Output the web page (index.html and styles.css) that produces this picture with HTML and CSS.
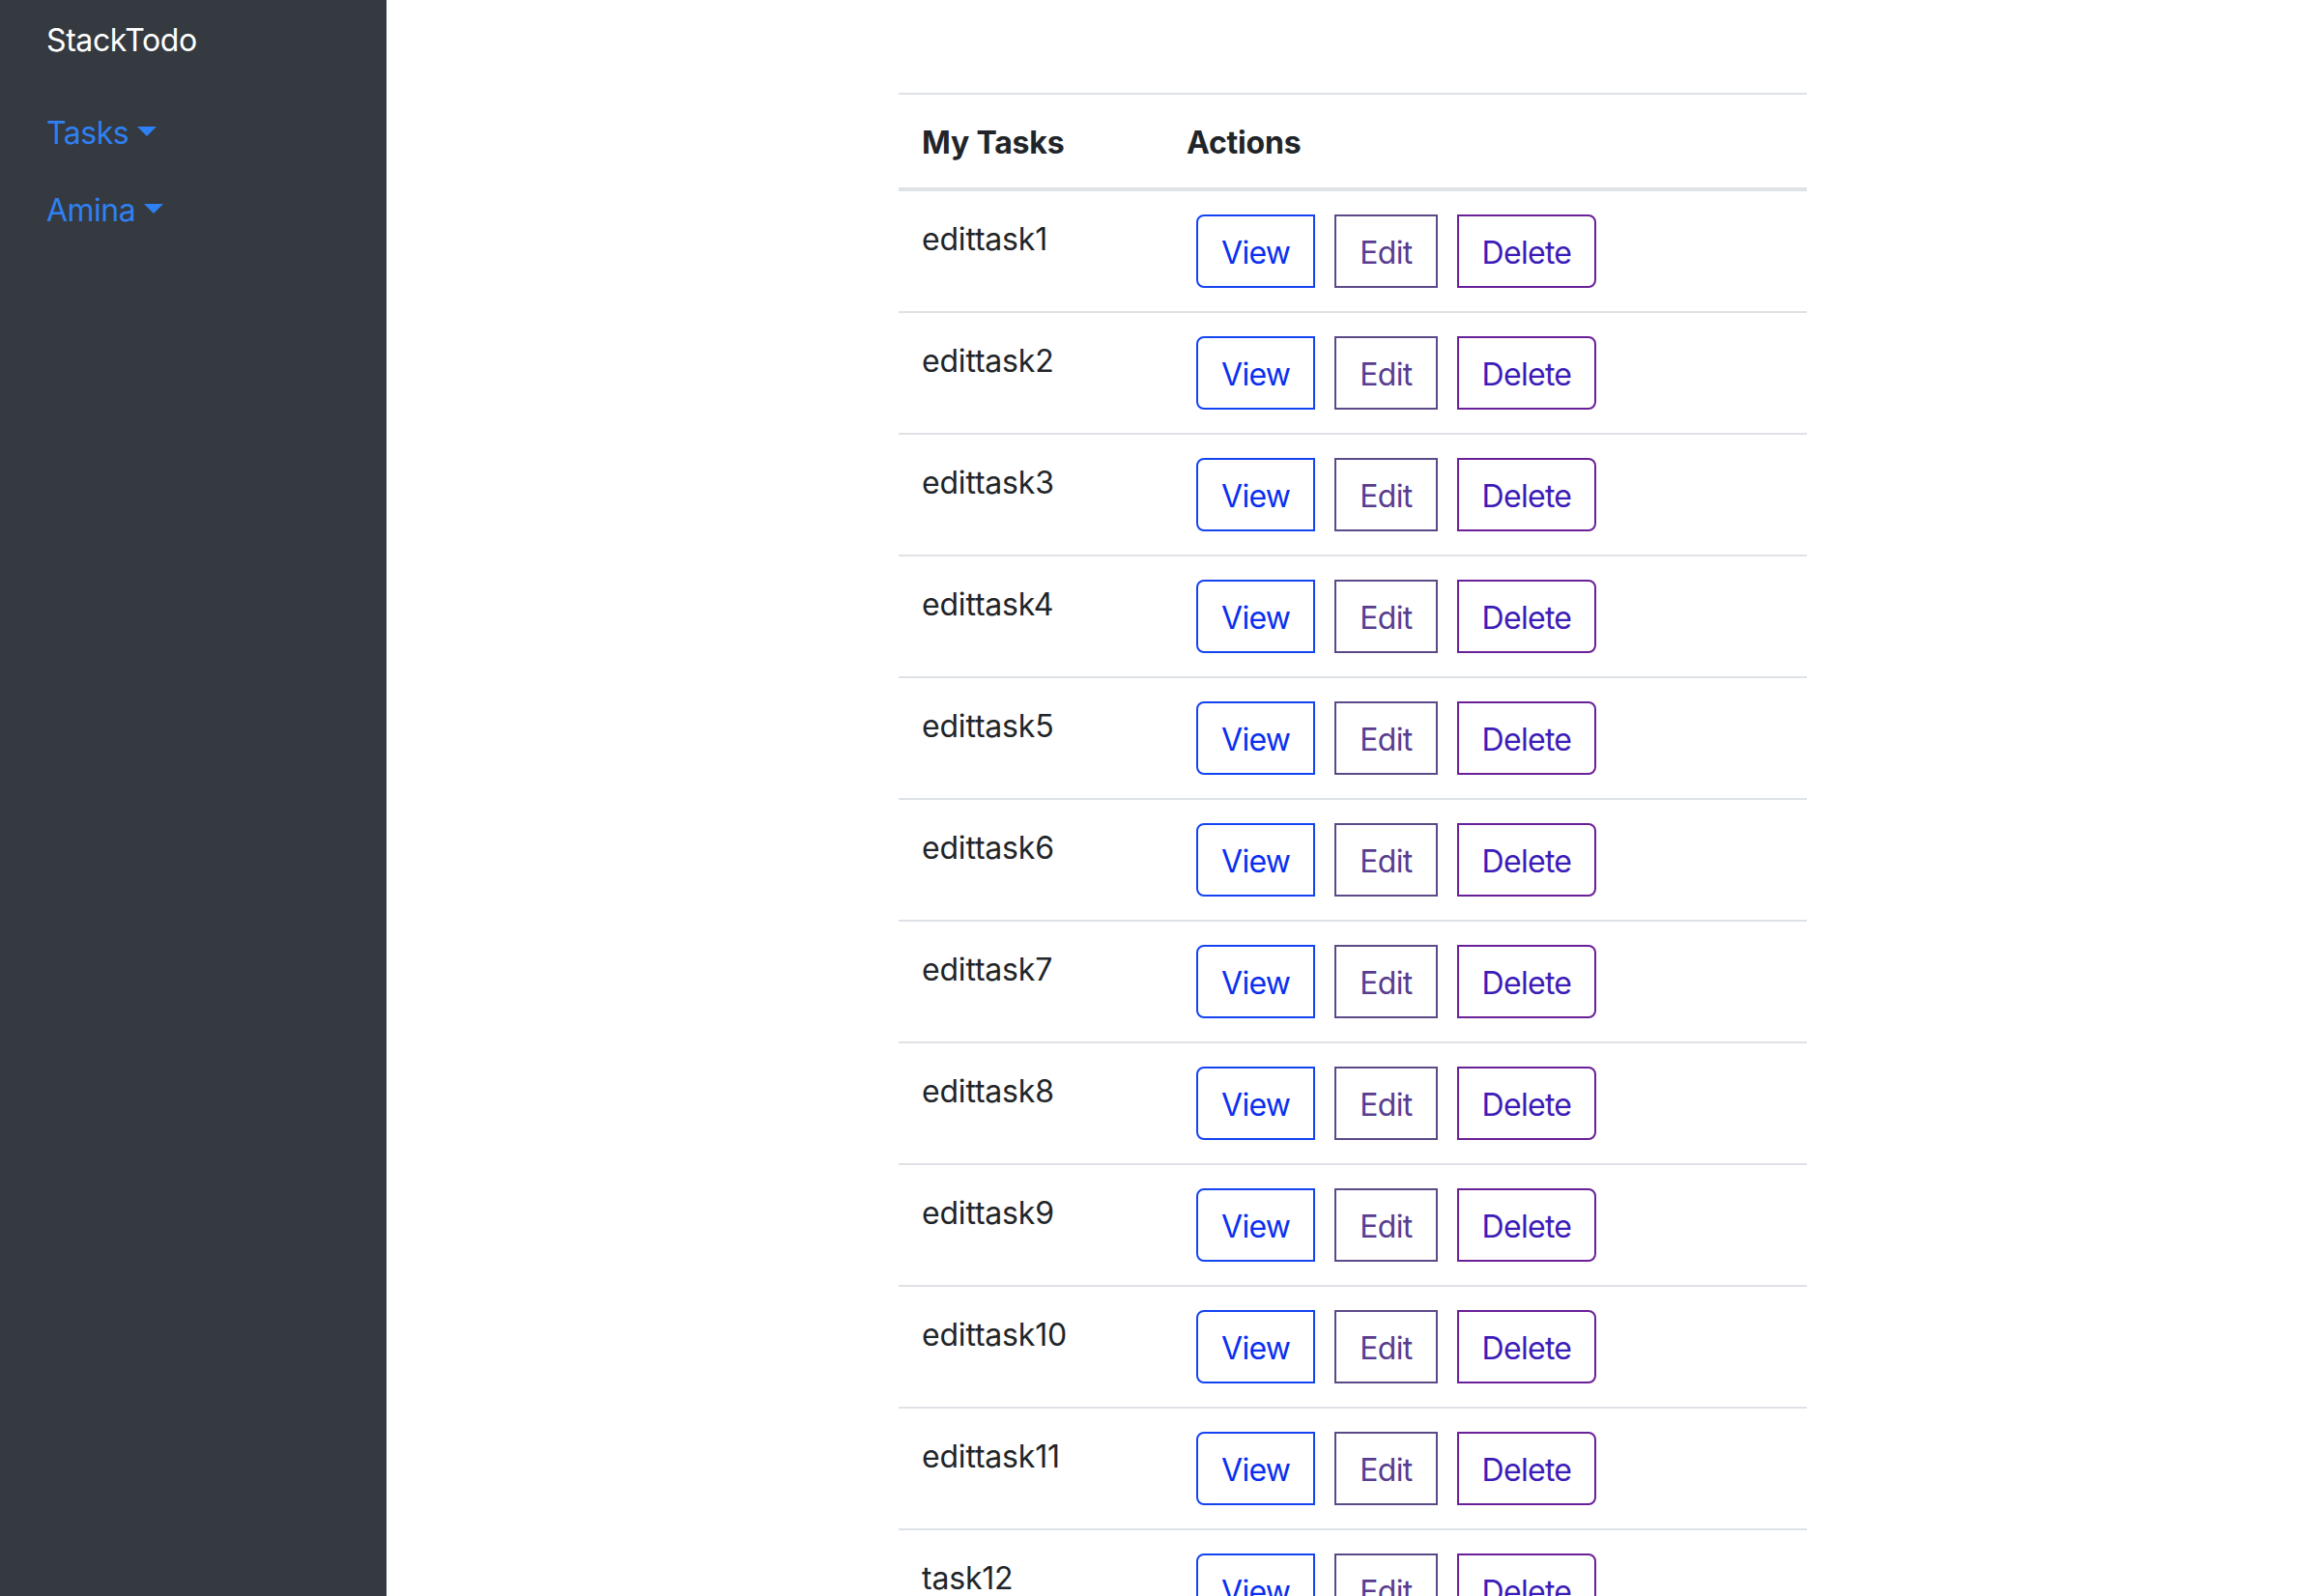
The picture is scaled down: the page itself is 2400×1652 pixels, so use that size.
FILE: index.html
```html
<!DOCTYPE html>
<html lang="en">
<head>
<meta charset="utf-8">
<title>StackTodo</title>
<link rel="stylesheet" href="styles.css">
</head>
<body>
<div class="layout">
  <aside class="sidebar">
    <div class="brand">StackTodo</div>
    <nav class="nav">
      <a class="nav-link" href="#">Tasks<span class="caret"></span></a>
      <a class="nav-link" href="#">Amina<span class="caret"></span></a>
    </nav>
  </aside>
  <main class="main">
    <table class="tasks">
      <thead>
        <tr><th class="col-name">My Tasks</th><th>Actions</th></tr>
      </thead>
      <tbody>
        <tr><td class="name">edittask1</td><td><div class="btn-group"><a class="btn btn-view" href="#">View</a><a class="btn btn-edit" href="#">Edit</a><a class="btn btn-delete" href="#">Delete</a></div></td></tr>
        <tr><td class="name">edittask2</td><td><div class="btn-group"><a class="btn btn-view" href="#">View</a><a class="btn btn-edit" href="#">Edit</a><a class="btn btn-delete" href="#">Delete</a></div></td></tr>
        <tr><td class="name">edittask3</td><td><div class="btn-group"><a class="btn btn-view" href="#">View</a><a class="btn btn-edit" href="#">Edit</a><a class="btn btn-delete" href="#">Delete</a></div></td></tr>
        <tr><td class="name">edittask4</td><td><div class="btn-group"><a class="btn btn-view" href="#">View</a><a class="btn btn-edit" href="#">Edit</a><a class="btn btn-delete" href="#">Delete</a></div></td></tr>
        <tr><td class="name">edittask5</td><td><div class="btn-group"><a class="btn btn-view" href="#">View</a><a class="btn btn-edit" href="#">Edit</a><a class="btn btn-delete" href="#">Delete</a></div></td></tr>
        <tr><td class="name">edittask6</td><td><div class="btn-group"><a class="btn btn-view" href="#">View</a><a class="btn btn-edit" href="#">Edit</a><a class="btn btn-delete" href="#">Delete</a></div></td></tr>
        <tr><td class="name">edittask7</td><td><div class="btn-group"><a class="btn btn-view" href="#">View</a><a class="btn btn-edit" href="#">Edit</a><a class="btn btn-delete" href="#">Delete</a></div></td></tr>
        <tr><td class="name">edittask8</td><td><div class="btn-group"><a class="btn btn-view" href="#">View</a><a class="btn btn-edit" href="#">Edit</a><a class="btn btn-delete" href="#">Delete</a></div></td></tr>
        <tr><td class="name">edittask9</td><td><div class="btn-group"><a class="btn btn-view" href="#">View</a><a class="btn btn-edit" href="#">Edit</a><a class="btn btn-delete" href="#">Delete</a></div></td></tr>
        <tr><td class="name">edittask10</td><td><div class="btn-group"><a class="btn btn-view" href="#">View</a><a class="btn btn-edit" href="#">Edit</a><a class="btn btn-delete" href="#">Delete</a></div></td></tr>
        <tr><td class="name">edittask11</td><td><div class="btn-group"><a class="btn btn-view" href="#">View</a><a class="btn btn-edit" href="#">Edit</a><a class="btn btn-delete" href="#">Delete</a></div></td></tr>
        <tr><td class="name">task12</td><td><div class="btn-group"><a class="btn btn-view" href="#">View</a><a class="btn btn-edit" href="#">Edit</a><a class="btn btn-delete" href="#">Delete</a></div></td></tr>
      </tbody>
    </table>
  </main>
</div>
</body>
</html>
```
FILE: styles.css
```css
html, body {
  margin: 0;
  padding: 0;
}
body {
  font-family: Inter, "Noto Sans", "Liberation Sans", sans-serif;
  font-size: 32px;
  line-height: 48px;
  letter-spacing: -0.2px;
  color: #212529;
  background: #ffffff;
}
.layout {
  display: flex;
  min-height: 100vh;
}
.sidebar {
  width: 400px;
  flex: 0 0 400px;
  background: #343a40;
  padding: 18px 48px 0;
  box-sizing: border-box;
}
.brand {
  color: #ffffff;
  font-size: 32px;
  line-height: 48px;
  letter-spacing: -0.4px;
}
.nav {
  display: flex;
  flex-direction: column;
  padding-top: 32px;
}
.nav-link {
  display: block;
  color: #2f80f2;
  text-decoration: none;
  padding: 16px 0;
  line-height: 48px;
  letter-spacing: -0.5px;
}
.caret {
  display: inline-block;
  margin-left: 9px;
  vertical-align: 8px;
  border-top: 10px solid currentColor;
  border-left: 10px solid transparent;
  border-right: 10px solid transparent;
}
.main {
  flex: 1;
  padding-top: 96px;
  display: flex;
  justify-content: center;
  align-items: flex-start;
}
.tasks {
  width: 940px;
  border-collapse: separate;
  border-spacing: 0;
}
.tasks th,
.tasks td {
  text-align: left;
  vertical-align: top;
  padding: 24px;
  border-top: 2px solid #dee2e6;
}
.tasks th {
  font-weight: 700;
  padding-top: 26px;
  padding-bottom: 22px;
  border-bottom: 4px solid #dee2e6;
}
.tasks td.name {
  padding-top: 26px;
}
.tasks tbody tr:first-child td {
  border-top: 0;
}
.col-name {
  width: 226px;
}
.btn-group {
  display: flex;
}
.btn {
  display: block;
  margin: 0 10px;
  padding: 14px 24px 10px;
  line-height: 48px;
  border: 2px solid;
  background: #ffffff;
  text-decoration: none;
  text-align: center;
  letter-spacing: -0.7px;
}
.btn-view {
  color: #0a2ff0;
  border-color: #1444f2;
  border-radius: 8px 0 0 8px;
}
.btn-edit {
  color: #583d8e;
  border-color: #5c4a88;
  border-radius: 0;
}
.btn-delete {
  color: #3c1cb8;
  border-color: #6a2098;
  border-radius: 0 8px 8px 0;
}
```
